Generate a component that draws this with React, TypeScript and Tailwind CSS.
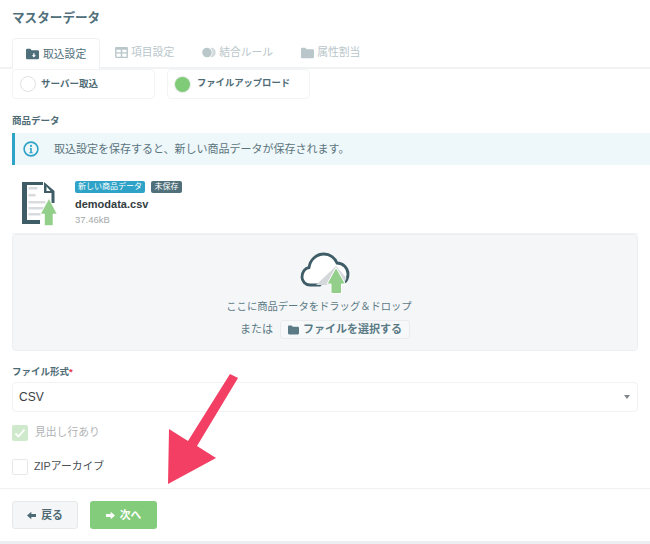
const FolderIcon = ({ className }: { className: string }) => (
  <svg viewBox="0 0 16 14" className={className} fill="currentColor">
    <path d="M0 2.2C0 1.200.7.500 1.700.500h3.600l1.600 1.800h7.400c.9 0 1.700.7 1.700 1.700v7.800c0 1-.8 1.700-1.700 1.700H1.700C.7 13.500 0 12.800 0 11.800z" />
  </svg>
);

const FolderDown = ({ className }: { className: string }) => (
  <svg viewBox="0 0 16 14" className={className} fill="currentColor">
    <path d="M0 2.2C0 1.200.7.500 1.700.500h3.600l1.600 1.800h7.400c.9 0 1.700.7 1.700 1.700v7.800c0 1-.8 1.700-1.700 1.700H1.700C.7 13.500 0 12.800 0 11.800z" />
    <path d="M10.500 6v2.400h1.700l-2.500 2.800-2.500-2.800h1.700V6z" fill="#fff" />
  </svg>
);

const TableIcon = ({ className }: { className: string }) => (
  <svg viewBox="0 0 14 12" className={className} fill="currentColor">
    <path fillRule="evenodd" d="M1 0h12a1 1 0 0 1 1 1v10a1 1 0 0 1-1 1H1a1 1 0 0 1-1-1V1a1 1 0 0 1 1-1zm.500 3v2.800h4.700V3zm6.300 0v2.800h4.700V3zM1.500 7.200v3.300h4.700V7.200zm6.300 0v3.300h4.700V7.200z" />
  </svg>
);

const Circles = ({ className }: { className: string }) => (
  <svg viewBox="0 0 16 12" className={className} fill="currentColor">
    <path d="M5.800.5a5.500 5.500 0 0 0 0 11 5.400 5.400 0 0 0 2.200-.5 5.500 5.500 0 0 0 0-10 5.400 5.400 0 0 0-2.200-.5z" />
    <path opacity=".65" d="M10.200.5a5.500 5.500 0 0 1 0 11 5.400 5.400 0 0 1-1-.1 6.600 6.600 0 0 0 0-10.800 5.400 5.400 0 0 1 1-.1z" />
  </svg>
);

const InfoIcon = () => (
  <svg viewBox="0 0 16 16" className="w-[16px] h-[16px] shrink-0" fill="none">
    <circle cx="8" cy="8" r="6.900" stroke="#2fa3c7" strokeWidth="1.600" />
    <circle cx="8" cy="4.900" r="1.100" fill="#2fa3c7" />
    <path d="M6.800 7h2v4.200h.9v1H6.300v-1h.9V8h-.4z" fill="#2fa3c7" />
  </svg>
);

const FatArrow = ({ dir, className }: { dir: "left" | "right"; className: string }) => (
  <svg viewBox="0 0 10 10" className={className} fill="currentColor">
    {dir === "left" ? (
      <path d="M0 5L4.800.8V3.300H10V6.700H4.800V9.200z" />
    ) : (
      <path d="M10 5L5.200.8V3.300H0V6.700H5.200V9.200z" />
    )}
  </svg>
);

const FileUpIcon = () => (
  <svg viewBox="0 0 36 45" className="w-[36px] h-[45px] shrink-0">
    <path d="M1 1H22V4H6V39H19V43H1z" fill="#3f5d66" />
    <path d="M23 1L33.500 10V22H30.500V12H23z" fill="#3f5d66" />
    <path d="M25.500 5.500L29.500 10H25.500z" fill="#fff" />
    <path d="M7.500 6h9v2.600h-9zM7.500 13h7v2.600h-7zM7.500 20h17v2.600h-17zM7.500 26h15v2.600h-15zM7.500 32h12v2.600h-12z" fill="#d9dcde" />
    <path d="M28 17.500L36 33H32V44.500H23.500V33H19.500z" fill="#93cf8b" stroke="#fff" strokeWidth=".6" />
  </svg>
);

const CloudUpIcon = () => (
  <svg viewBox="0 0 50 42" className="w-[50px] h-[42px]">
    <path d="M20 33H10C5 33 2 29 2 25C2 20 5 16 9 15.500C10 8 16 2 24 2C30 2 35 6 37 11C43 11 48 16 48 22C48 25 47 28 45 30V33H20z" fill="#fff" />
    <path d="M20 33H10C5 33 2 29 2 25C2 20 5 16 9 15.500C10 8 16 2 24 2C30 2 35 6 37 11C43 11 48 16 48 22C48 25 47 28 45 30" fill="none" stroke="#3f5d66" strokeWidth="2.800" strokeLinecap="round" />
    <path d="M16 33L36 14L46.500 26L44 32L26 33z" fill="#d5d8da" />
    <path d="M36 15.500L45.500 32H41.500V41.500H31V32H27z" fill="#93cf8b" stroke="#fff" strokeWidth="1" />
  </svg>
);

const tabs = [
  { label: "項目設定", icon: <TableIcon className="w-[13px] h-[11px]" /> },
  { label: "結合ルール", icon: <Circles className="w-[14px] h-[11px]" /> },
  { label: "属性割当", icon: <FolderIcon className="w-[13px] h-[12px]" /> },
];

export default function App() {
  return (
    <div className="relative w-[650px] h-[544px] overflow-hidden bg-white text-[#4e6b75] font-['Liberation_Sans','Noto_Sans_CJK_JP',sans-serif]">
      <h1 className="h-[38px] pl-3 pt-[9px] text-[12.600px] leading-[18px] font-bold text-[#4f6f7a]">マスターデータ</h1>

      <div className="flex h-[31px] pl-3 border-b-2 border-[#f1f2f3]">
        <div className="flex items-center gap-[4px] w-[88px] h-[31px] pl-[13px] bg-white border border-b-0 border-[#eef0f1] rounded-t text-[10.800px] text-[#4f6f7a]">
          <FolderDown className="w-[13px] h-[12px]" />
          取込設定
        </div>
        <div className="flex items-center gap-[28px] pl-[15px] text-[#b9c6ca] text-[10.800px]">
          {tabs.map((t) => (
            <div key={t.label} className="flex items-center gap-[3px]">
              {t.icon}
              {t.label}
            </div>
          ))}
        </div>
      </div>

      <div className="flex gap-3 pl-3">
        <div className="flex items-center gap-[5px] w-[143px] h-[30px] pl-[7px] border border-[#f3f4f5] rounded-sm text-[9.500px] font-bold">
          <span className="w-[16px] h-[16px] rounded-full border border-[#dfe2e4] bg-white" />
          サーバー取込
        </div>
        <div className="flex items-center gap-[7px] w-[143px] h-[30px] pl-[7px] border border-[#f3f4f5] rounded-sm text-[9.300px] font-bold">
          <span className="w-[15px] h-[15px] rounded-full bg-[#7fcb78] ring-1 ring-[#e8eaeb]" />
          ファイルアップロード
        </div>
      </div>

      <div className="pl-3 mt-[15px] text-[9.500px] leading-[14px] font-bold">商品データ</div>

      <div className="flex items-center gap-[15px] h-[32px] ml-3 mt-[5px] pl-[8px] border-l-[3px] border-[#2fa3c7] bg-[#eef7fa] text-[11px] text-[#5a747d]">
        <InfoIcon />
        取込設定を保存すると、新しい商品データが保存されます。
      </div>

      <div className="flex gap-[18px] h-[69px] ml-3 mr-3 pl-[9px] pt-[16px] border-b border-[#f1f2f3]">
        <FileUpIcon />
        <div>
          <div className="flex gap-[6px]">
            <span className="h-[12px] px-[3px] rounded-[2px] bg-[#2fa3c7] text-white text-[8px] leading-[12px]">新しい商品データ</span>
            <span className="h-[12px] px-[3.500px] rounded-[2px] bg-[#4f6f7a] text-white text-[8px] leading-[12px]">未保存</span>
          </div>
          <div className="mt-[3px] text-[11px] leading-[16px] font-bold text-[#333c40]">demodata.csv</div>
          <div className="mt-[2px] text-[9.500px] leading-[12px] text-[#a5a8aa]">37.46kB</div>
        </div>
      </div>

      <div className="flex flex-col items-center h-[117px] mx-3 pt-[17px] bg-[#f5f6f8] border border-[#eceef0] rounded-sm text-[#5a7a85]">
        <CloudUpIcon />
        <div className="mt-[5px] pr-[12px] text-[10.300px] leading-[16px]">ここに商品データをドラッグ＆ドロップ</div>
        <div className="flex items-center gap-[7px] mt-[5px] text-[11px]">
          または
          <span className="flex items-center gap-[4px] h-[19px] px-[7px] bg-[#f7f8f9] border border-[#e9ebec] rounded-[3px] font-bold">
            <FolderIcon className="w-[11px] h-[10px]" />
            ファイルを選択する
          </span>
        </div>
      </div>

      <div className="pl-3 mt-[14px] text-[9.500px] leading-[14px] font-bold">
        ファイル形式<span className="text-[#e8334a]">*</span>
      </div>

      <div className="flex items-center justify-between h-[30px] mx-3 mt-[3px] pl-[6px] pr-[7px] border border-[#f1f2f3] rounded-[4px] text-[12px] text-[#3b4144]">
        CSV
        <span className="w-0 h-0 border-x-[3px] border-x-transparent border-t-[4px] border-t-[#80868a]" />
      </div>

      <div className="flex items-center gap-[7px] h-[17px] pl-3 mt-[12px] text-[10.800px] text-[#b0b3b5]">
        <span className="flex items-center justify-center w-[16px] h-[16px] rounded-[2px] bg-[#cfe9cc]">
          <svg viewBox="0 0 12 12" className="w-[12px] h-[12px]" fill="none" stroke="#fff" strokeWidth="1.800">
            <path d="M1.500 6.500L4.500 9.500L10.500 2.500" />
          </svg>
        </span>
        見出し行あり
      </div>

      <div className="flex items-center gap-[6px] h-[17px] pl-3 mt-[17px] text-[10.800px] text-[#4a4f52]">
        <span className="w-[16px] h-[16px] rounded-[2px] border border-[#e6e8e9] bg-white" />
        ZIPアーカイブ
      </div>

      <div className="flex gap-3 h-[53px] mt-[13px] pl-3 pt-[12px] border-t border-[#f0f1f2]">
        <div className="flex items-center justify-center gap-[5px] w-[66px] h-[28px] rounded-[3px] bg-[#f4f6f7] border border-[#e6e9ea] text-[10.800px] font-bold">
          <FatArrow dir="left" className="w-[9px] h-[9px]" />
          戻る
        </div>
        <div className="flex items-center justify-center gap-[5px] w-[67px] h-[28px] rounded-[3px] bg-[#82cc7b] text-white text-[10.800px] font-bold">
          <FatArrow dir="right" className="w-[9px] h-[9px]" />
          次へ
        </div>
      </div>

      <div className="h-[3px] bg-[#eceeef]" />

      <svg viewBox="0 0 650 544" className="absolute inset-0 w-[650px] h-[544px] pointer-events-none">
        <polygon points="230,374 238,378 197,446 216,458 168,484 169,429 188,441" fill="#f23f63" />
      </svg>
    </div>
  );
}
